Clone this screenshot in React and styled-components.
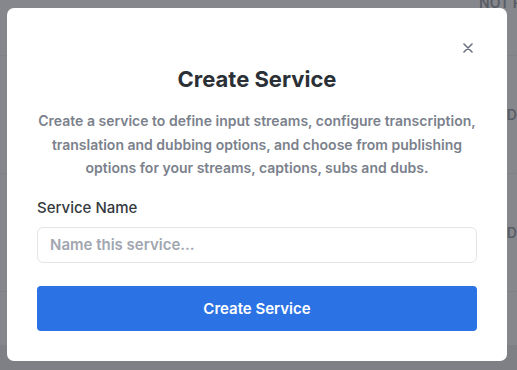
import React from "react";
import styled, { createGlobalStyle } from "styled-components";

const Global = createGlobalStyle`
  html, body { margin: 0; padding: 0; }
  body {
    width: 517px; height: 370px; overflow: hidden;
    font-family: Inter, "Noto Sans", sans-serif;
    background: #ffffff;
  }
`;

const Page = styled.div`
  display: flex;
  flex-direction: column;
  height: 370px;
  background: #ffffff;
`;

const Table = styled.div`
  display: flex;
  flex-direction: column;
  flex: 1;
`;

const Row = styled.div`
  height: ${(p) => p.$h}px;
  flex-shrink: 0;
  border-bottom: 1px solid #e5e7eb;
  display: flex;
  align-items: ${(p) => (p.$top ? "flex-start" : "center")};
  justify-content: flex-end;
  overflow: hidden;
`;

const Cell = styled.span`
  font-size: 14px;
  font-weight: 600;
  color: #4b5563;
  width: 38px;
  white-space: nowrap;
  overflow: hidden;
  margin-top: ${(p) => (p.$top ? "-6px" : "0")};
`;

const Footer = styled.div`
  height: 25px;
  background: #e2e3e8;
`;

const Overlay = styled.div`
  position: fixed;
  inset: 0;
  background: rgba(94, 95, 102, 0.75);
`;

const Modal = styled.div`
  position: fixed;
  left: 7px;
  top: 8px;
  width: 500px;
  height: 353px;
  box-sizing: border-box;
  background: #ffffff;
  border-radius: 7px;
  padding: 57px 30px 30px;
  display: flex;
  flex-direction: column;
`;

const Close = styled.button`
  position: absolute;
  top: 32px;
  right: 31px;
  width: 16px;
  height: 16px;
  padding: 0;
  border: 0;
  background: transparent;
  display: flex;
  align-items: center;
  justify-content: center;
  cursor: pointer;
`;

const Title = styled.h2`
  margin: 0;
  text-align: center;
  font-size: 22px;
  line-height: 28px;
  font-weight: 700;
  color: #2a3036;
`;

const Description = styled.p`
  margin: 16px 0 0;
  text-align: center;
  font-size: 14px;
  line-height: 23.5px;
  font-weight: 600;
  color: #7b818c;
`;

const Label = styled.label`
  margin-top: 18px;
  font-size: 15px;
  line-height: 20px;
  font-weight: 500;
  color: #353a40;
`;

const Input = styled.input`
  margin-top: 9px;
  height: 36px;
  box-sizing: border-box;
  border: 1px solid #e3e5e8;
  border-radius: 6px;
  padding: 0 12px;
  font-family: inherit;
  font-size: 15px;
  font-weight: 600;
  color: #111827;
  outline: none;
  &::placeholder { color: #a1a6b0; }
`;

const Button = styled.button`
  margin-top: 23px;
  height: 45px;
  border: 0;
  border-radius: 4px;
  background: #2b72e4;
  color: #ffffff;
  font-family: inherit;
  font-size: 15px;
  font-weight: 600;
  cursor: pointer;
`;

export default function App() {
  return (
    <>
      <Global />
      <Page>
        <Table>
          <Row $h={55} $top>
            <Cell $top>NOT READY</Cell>
          </Row>
          <Row $h={117}>
            <Cell>READY</Cell>
          </Row>
          <Row $h={117}>
            <Cell>READY</Cell>
          </Row>
        </Table>
        <Footer />
      </Page>
      <Overlay />
      <Modal role="dialog">
        <Close aria-label="Close">
          <svg width="10" height="10" viewBox="0 0 10 10" fill="none">
            <path d="M1 1L9 9M9 1L1 9" stroke="#6b7280" strokeWidth="1.6" strokeLinecap="round" />
          </svg>
        </Close>
        <Title>Create Service</Title>
        <Description>
          Create a service to define input streams, configure transcription,
          translation and dubbing options, and choose from publishing options
          for your streams, captions, subs and dubs.
        </Description>
        <Label htmlFor="service-name">Service Name</Label>
        <Input id="service-name" placeholder="Name this service..." />
        <Button>Create Service</Button>
      </Modal>
    </>
  );
}
